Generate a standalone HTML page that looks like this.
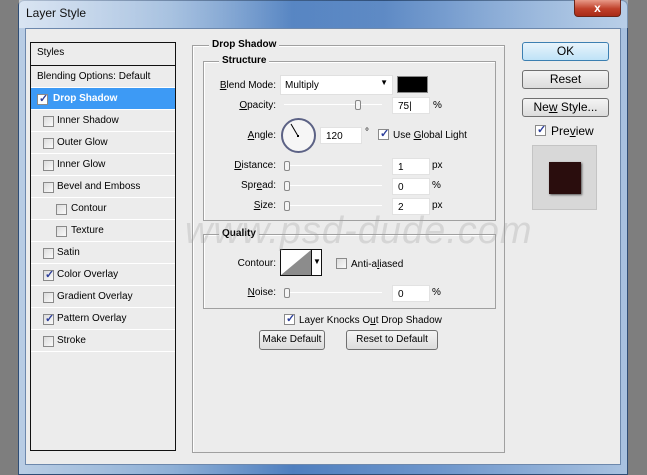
<!DOCTYPE html><html><head><style>
*{margin:0;padding:0;box-sizing:border-box}
body{width:647px;height:470px;overflow:hidden;background:#7e7e7e;font-family:"Liberation Sans",sans-serif;font-size:10px;color:#000;position:relative}
.a{position:absolute}
.win{left:18px;top:0;width:610px;height:475px;background:linear-gradient(90deg,#b9cde4 0%,#8fb0d6 25%,#4f7fbf 45%,#6f97cc 70%,#a9c2e0 100%);border:1px solid #2f4d75;border-radius:6px 6px 0 0}
.inner{left:25px;top:28px;width:596px;height:437px;background:#ececec;border:1px solid #6d88ac}
.cb{position:absolute;width:11px;height:11px;border:1px solid #8a8a8a;background:linear-gradient(135deg,#dcdcdc,#fafafa)}
.cb.c::after{content:"✓";position:absolute;left:1px;top:-3px;font-size:11px;color:#2c3e9a;font-weight:bold}
.row{position:absolute;left:31px;width:144px;height:22px;border-bottom:1px solid #fff;line-height:21px;font-size:10px}
.btn{position:absolute;border:1px solid #707070;border-radius:3px;background:linear-gradient(#f4f4f4,#dcdcdc);text-align:center;font-size:12px}
.in{position:absolute;background:#fff;border:1px solid #e2e2e2;height:17px;width:38px;font-size:10px;padding:3px 0 0 5px}
.trk{position:absolute;height:1px;background:#aaa;border-bottom:1px solid #fff;width:98px;left:284px}
.th{position:absolute;width:6px;height:10px;border:1px solid #888;border-radius:2px;background:#f4f4f4}
.lb{position:absolute;text-align:right;font-size:10px}
.grp{position:absolute;border:1px solid #a0a0a0;box-shadow:1px 1px 0 #fff inset}
.lg{position:absolute;background:#ececec;font-weight:bold;font-size:10px;padding:0 3px}
</style></head><body>
<div class="a win"></div>
<div class="a" style="left:19px;top:0;width:609px;height:28px;background:linear-gradient(90deg,rgba(230,238,248,.7),rgba(120,160,210,.2) 45%,rgba(60,110,180,.1) 60%,rgba(200,220,240,.5))"></div>
<div class="a" style="left:26px;top:6px;font-size:12px;color:#111">Layer Style</div>
<div class="a" style="left:574px;top:0;width:47px;height:17px;background:linear-gradient(#e89a88,#c0402a 55%,#a82b18);border:1px solid #6a2418;border-top:none;border-radius:0 0 4px 4px;color:#fff;font-weight:bold;text-align:center;font-size:12px;line-height:16px">x</div>
<div class="a inner"></div>
<!-- styles list -->
<div class="a" style="left:30px;top:42px;width:146px;height:409px;border:1px solid #111;background:#ececec"></div>
<div class="row" style="top:43px;height:23px;line-height:20px;padding-left:6px;border-bottom:1px solid #111">Styles</div>
<div class="row" style="top:66px;padding-left:6px">Blending Options: Default</div>
<div class="row" style="top:88px;background:#3d9af5;color:#fff;font-weight:bold;padding-left:22px">Drop Shadow</div>
<div class="cb c" style="left:37px;top:94px;background:#fff"></div>
<div class="row" style="top:110px;padding-left:26px">Inner Shadow</div><div class="cb" style="left:43px;top:116px"></div>
<div class="row" style="top:132px;padding-left:26px">Outer Glow</div><div class="cb" style="left:43px;top:138px"></div>
<div class="row" style="top:154px;padding-left:26px">Inner Glow</div><div class="cb" style="left:43px;top:160px"></div>
<div class="row" style="top:176px;padding-left:26px">Bevel and Emboss</div><div class="cb" style="left:43px;top:182px"></div>
<div class="row" style="top:198px;padding-left:40px">Contour</div><div class="cb" style="left:56px;top:204px"></div>
<div class="row" style="top:220px;padding-left:40px">Texture</div><div class="cb" style="left:56px;top:226px"></div>
<div class="row" style="top:242px;padding-left:26px">Satin</div><div class="cb" style="left:43px;top:248px"></div>
<div class="row" style="top:264px;padding-left:26px">Color Overlay</div><div class="cb c" style="left:43px;top:270px"></div>
<div class="row" style="top:286px;padding-left:26px">Gradient Overlay</div><div class="cb" style="left:43px;top:292px"></div>
<div class="row" style="top:308px;padding-left:26px">Pattern Overlay</div><div class="cb c" style="left:43px;top:314px"></div>
<div class="row" style="top:330px;padding-left:26px">Stroke</div><div class="cb" style="left:43px;top:336px"></div>
<!-- main group -->
<div class="grp" style="left:192px;top:45px;width:313px;height:408px"></div>
<div class="lg" style="left:209px;top:39px">Drop Shadow</div>
<div class="grp" style="left:203px;top:61px;width:293px;height:160px"></div>
<div class="lg" style="left:219px;top:55px">Structure</div>
<div class="lb" style="left:200px;top:80px;width:76px"><u>B</u>lend Mode:</div>
<div class="a" style="left:280px;top:75px;width:113px;height:20px;background:#fff;border:1px solid #e0e0e0;padding:4px 0 0 4px">Multiply<span style="position:absolute;right:4px;top:2px;font-size:8px">▼</span></div>
<div class="a" style="left:397px;top:76px;width:31px;height:17px;background:#000;border:1px solid #888"></div>
<div class="lb" style="left:200px;top:100px;width:76px"><u>O</u>pacity:</div>
<div class="trk" style="top:104px"></div><div class="th" style="left:355px;top:100px"></div>
<div class="in" style="left:392px;top:97px">75|</div><div class="a" style="left:433px;top:100px">%</div>
<div class="lb" style="left:200px;top:130px;width:76px"><u>A</u>ngle:</div>
<div class="a" style="left:281px;top:118px;width:35px;height:35px;border:2px solid #5c6285;border-radius:50%;background:#f6f6f6"></div>
<svg class="a" style="left:281px;top:118px" width="35" height="35"><line x1="17" y1="18" x2="10" y2="6" stroke="#000" stroke-width="1"/><rect x="16" y="17" width="2" height="2"/></svg>
<div class="in" style="left:320px;top:127px;width:42px">120</div><div class="a" style="left:365px;top:127px">°</div>
<div class="cb c" style="left:378px;top:129px;background:#fff"></div>
<div class="a" style="left:393px;top:130px">Use <u>G</u>lobal Light</div>
<div class="lb" style="left:200px;top:160px;width:76px"><u>D</u>istance:</div>
<div class="trk" style="top:165px"></div><div class="th" style="left:284px;top:161px"></div>
<div class="in" style="left:392px;top:158px">1</div><div class="a" style="left:432px;top:160px">px</div>
<div class="lb" style="left:200px;top:180px;width:76px">Spr<u>e</u>ad:</div>
<div class="trk" style="top:185px"></div><div class="th" style="left:284px;top:181px"></div>
<div class="in" style="left:392px;top:178px">0</div><div class="a" style="left:432px;top:180px">%</div>
<div class="lb" style="left:200px;top:200px;width:76px"><u>S</u>ize:</div>
<div class="trk" style="top:205px"></div><div class="th" style="left:284px;top:201px"></div>
<div class="in" style="left:392px;top:198px">2</div><div class="a" style="left:432px;top:200px">px</div>
<div class="grp" style="left:203px;top:234px;width:293px;height:75px"></div>
<div class="lg" style="left:219px;top:228px">Quality</div>
<div class="lb" style="left:200px;top:258px;width:76px">Contour:</div>
<div class="a" style="left:280px;top:249px;width:42px;height:27px;border:1px solid #111;background:#fff"></div>
<svg class="a" style="left:281px;top:250px" width="30" height="25"><polygon points="0,25 30,0 30,25" fill="#8c8c8c"/></svg>
<div class="a" style="left:311px;top:250px;width:1px;height:25px;background:#111"></div>
<div class="a" style="left:313px;top:257px;font-size:8px">▼</div>
<div class="cb" style="left:336px;top:258px"></div>
<div class="a" style="left:351px;top:259px">Anti-a<u>l</u>iased</div>
<div class="lb" style="left:200px;top:287px;width:76px"><u>N</u>oise:</div>
<div class="trk" style="top:292px"></div><div class="th" style="left:284px;top:288px"></div>
<div class="in" style="left:392px;top:285px">0</div><div class="a" style="left:432px;top:287px">%</div>
<div class="cb c" style="left:284px;top:314px;background:#fff"></div>
<div class="a" style="left:299px;top:315px">Layer Knocks O<u>u</u>t Drop Shadow</div>
<div class="btn" style="left:259px;top:330px;width:66px;height:20px;font-size:10px;line-height:18px">Make Default</div>
<div class="btn" style="left:346px;top:330px;width:92px;height:20px;font-size:10px;line-height:18px">Reset to Default</div>
<!-- right buttons -->
<div class="btn" style="left:522px;top:42px;width:87px;height:19px;border-color:#3c7fb1;background:linear-gradient(#e8f4fb,#bfe3f7);line-height:17px">OK</div>
<div class="btn" style="left:522px;top:70px;width:87px;height:19px;line-height:17px">Reset</div>
<div class="btn" style="left:522px;top:98px;width:87px;height:19px;line-height:17px">Ne<u>w</u> Style...</div>
<div class="cb c" style="left:535px;top:125px;background:#fff"></div>
<div class="a" style="left:551px;top:124px;font-size:12px">Pre<u>v</u>iew</div>
<div class="a" style="left:532px;top:145px;width:65px;height:65px;background:#d8d8d8;border:1px solid #c4c4c4"></div>
<div class="a" style="left:549px;top:162px;width:32px;height:32px;background:#2a0d0d;box-shadow:1px 1px 2px #555"></div>
<!-- watermark -->
<div class="a" style="left:185px;top:210px;font-size:38px;font-style:italic;color:rgba(160,160,160,.3);letter-spacing:1px">www.psd-dude.com</div>
</body></html>
